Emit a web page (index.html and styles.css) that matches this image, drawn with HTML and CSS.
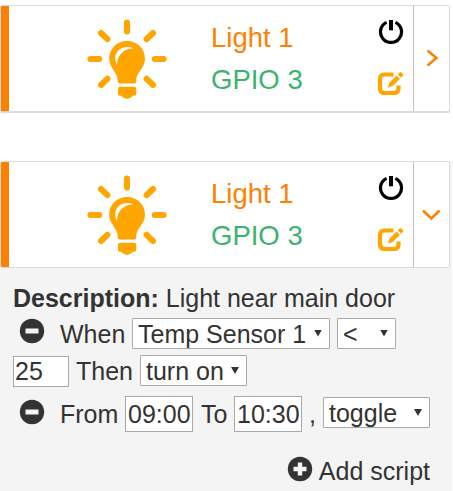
FILE: index.html
```html
<!DOCTYPE html>
<html lang="en">
<head>
<meta charset="utf-8">
<title>Lights</title>
<link rel="stylesheet" href="styles.css">
</head>
<body>
<svg class="defs" width="0" height="0">
  <defs>
    <symbol id="bulb" viewBox="0 0 80 80">
      <g stroke="#ffa500" stroke-width="6" stroke-linecap="round">
        <path d="M40 3.400V12.500M3.400 40H12.200M67.800 40H76.600M14 14L20.400 20.200M66 14L59.600 20.200M14 66L20.400 59.800M66 66L59.600 59.800"/>
      </g>
      <path fill="#ffa500" d="M40 22C29.500 22 22.200 30 22.200 39.700C22.200 49 30.700 53.500 30.700 61V62.500Q30.700 64.500 32.700 64.500H47.300Q49.300 64.500 49.300 62.500V61C49.300 53.500 58 49 58 39.700C58 30 50.500 22 40 22Z"/>
      <path fill="#fff" d="M46.500 29.200C38 25.500 28.200 30 28.200 39.500Q28.200 43 30 46C30 37 35.500 29.800 46.500 29.200Z"/>
      <path fill="#ffa500" d="M33 67.700H47Q49.300 67.700 49.300 70V74.500Q49.300 76.700 47 76.700H45.500Q43.500 79.700 40 79.700T34.500 76.700H33Q31 76.700 31 74.500V70Q31 67.700 33 67.700Z"/>
    </symbol>
    <symbol id="power" viewBox="0 0 26 26">
      <path d="M8.600 3.400A10.500 10.500 0 1 0 17.400 3.400" fill="none" stroke="#000" stroke-width="3.200"/>
      <path d="M13 1V11.300" stroke="#000" stroke-width="4"/>
    </symbol>
    <symbol id="edit" viewBox="0 0 28 26">
      <path d="M16.500 3.500H7.500Q3 3.500 3 8V17.500Q3 22 7.500 22H17Q21.500 22 21.500 17.500V14.500" fill="none" stroke="#ffa500" stroke-width="4.200"/>
      <path fill="#ffa500" d="M11 16.700L12.300 11.700L19.600 4.400L23 7.800L15.700 15.100ZM20.700 3.300L22.600 1.400Q23.400 .600 24.200 1.400L26 3.200Q26.800 4 26 4.800L24.100 6.700Z"/>
    </symbol>
    <symbol id="minus" viewBox="0 0 26 26">
      <circle cx="13" cy="13" r="12.200" fill="#333"/>
      <rect x="6.500" y="10.500" width="13" height="5" rx=".5" fill="#f4f4f4"/>
    </symbol>
    <symbol id="plus" viewBox="0 0 26 26">
      <circle cx="13" cy="13" r="12.200" fill="#333"/>
      <path d="M13 6.500V19.500M6.500 13H19.500" stroke="#f4f4f4" stroke-width="4.400"/>
    </symbol>
  </defs>
</svg>

<section class="device">
  <div class="card closed">
    <div class="picture"><svg class="bulb"><use href="#bulb"/></svg></div>
    <div class="info"><div class="name">Light 1</div><div class="pin">GPIO 3</div></div>
    <div class="actions"><svg class="power"><use href="#power"/></svg><svg class="edit"><use href="#edit"/></svg></div>
    <div class="expand"><svg width="20" height="20" viewBox="0 0 20 20"><path d="M6.500 2.500L15.500 10L6.500 17.500" /></svg></div>
  </div>
</section>

<section class="device open">
  <div class="card">
    <div class="picture"><svg class="bulb"><use href="#bulb"/></svg></div>
    <div class="info"><div class="name">Light 1</div><div class="pin">GPIO 3</div></div>
    <div class="actions"><svg class="power"><use href="#power"/></svg><svg class="edit"><use href="#edit"/></svg></div>
    <div class="expand"><svg width="20" height="20" viewBox="0 0 20 20"><path d="M2 6.500L10.300 14.500L18.600 6.500" /></svg></div>
  </div>
  <div class="details">
    <div class="row description"><span><b>Description:</b> Light near main door</span></div>
    <div class="row condition">
      <svg class="round"><use href="#minus"/></svg>
      <span class="label">When</span>
      <span class="field select sensor">Temp Sensor 1<i class="arrow"></i></span>
      <span class="field select operator">&lt;<i class="arrow"></i></span>
    </div>
    <div class="row result">
      <span class="field value">25</span>
      <span class="then">Then</span>
      <span class="field select state">turn on<i class="arrow"></i></span>
    </div>
    <div class="row schedule">
      <svg class="round"><use href="#minus"/></svg>
      <span class="label">From</span>
      <span class="field time">09:00</span>
      <span>To</span>
      <span class="field time">10:30</span>
      <span class="comma">,</span>
      <span class="field select toggle">toggle<i class="arrow"></i></span>
    </div>
    <div class="row add"><svg class="round"><use href="#plus"/></svg><span>Add script</span></div>
  </div>
</section>
</body>
</html>
```
FILE: styles.css
```css
* { box-sizing: border-box; }
body {
  margin: 0;
  padding-top: 5px;
  height: 491px;
  overflow: hidden;
  background: #fff;
  color: #333;
  font: 25px/30px "Liberation Sans", Arial, sans-serif;
}
svg { display: block; flex: none; }
.defs { position: absolute; }
.device { width: 452px; height: 109px; margin-bottom: 47px; }
.open { height: 330px; margin: 0; background: #f4f4f4; }
.card {
  display: flex;
  width: 450px;
  height: 107px;
  background: linear-gradient(#ff8000, #ff8000) 0 0 / 8px 100% no-repeat #fff;
  border: 1px solid #dcdcdc;
  border-radius: 2px;
}
.closed { height: 108px; border-bottom-width: 2px; }
.picture { width: 210px; padding: 13px 0 0 86px; }
.bulb { width: 80px; height: 80px; }
.info { width: 166px; font-size: 27.5px; line-height: 42px; padding-top: 11px; white-space: nowrap; }
.name { color: #ff8000; }
.pin { color: #3cb371; }
.actions { width: 36px; padding-top: 13px; }
.power { width: 26px; height: 26px; margin-left: 1px; }
.edit { width: 28px; height: 26px; margin: 26px 0 0 0; }
.expand { flex: 1; border-left: 1px solid #cbbfb3; padding: 42px 0 0 7px; }
.expand path { fill: none; stroke: #ff8000; stroke-width: 2.5; }
.details { padding: 14px 22px 0 13px; }
.row { display: flex; align-items: center; white-space: nowrap; }
.description { height: 32px; }
.condition { height: 38px; }
.result { height: 37px; }
.schedule { height: 50px; }
.round { width: 26px; height: 26px; }
.condition .round, .schedule .round { margin: -4px 0 0 6px; }
.label { width: 72px; margin-left: 15px; padding-top: 1px; }
.schedule .label { width: 65px; padding: 0; }
.field {
  display: flex;
  align-items: center;
  height: 31px;
  border: 1px solid #a9a9a9;
  background: #fff;
  line-height: 29px;
}
.condition .field { padding-top: 2px; }
.select { justify-content: space-between; padding: 0 7px 0 5px; border-radius: 1px; }
.arrow {
  width: 8px;
  height: 7px;
  margin-top: -2px;
  background: #333;
  clip-path: polygon(0 0, 100% 0, 50% 100%);
}
.sensor { width: 198px; }
.operator { width: 59px; margin-left: 7px; }
.value { width: 56px; margin: 2px 7px 0 0; padding-left: 1px; }
.then { width: 57px; padding-top: 1px; }
.state { width: 107px; margin-left: 7px; padding-top: 2px; }
.time { width: 68px; height: 36px; padding-left: 2px; }
.time + span { width: 33px; margin-left: 8px; }
.time + .comma { width: 14px; margin-left: 7px; }
.toggle { width: 107px; margin-top: -3px; padding-top: 2px; }
.add { height: 64px; justify-content: flex-end; }
.add .round { margin: -4px 6px 0 0; }
```
